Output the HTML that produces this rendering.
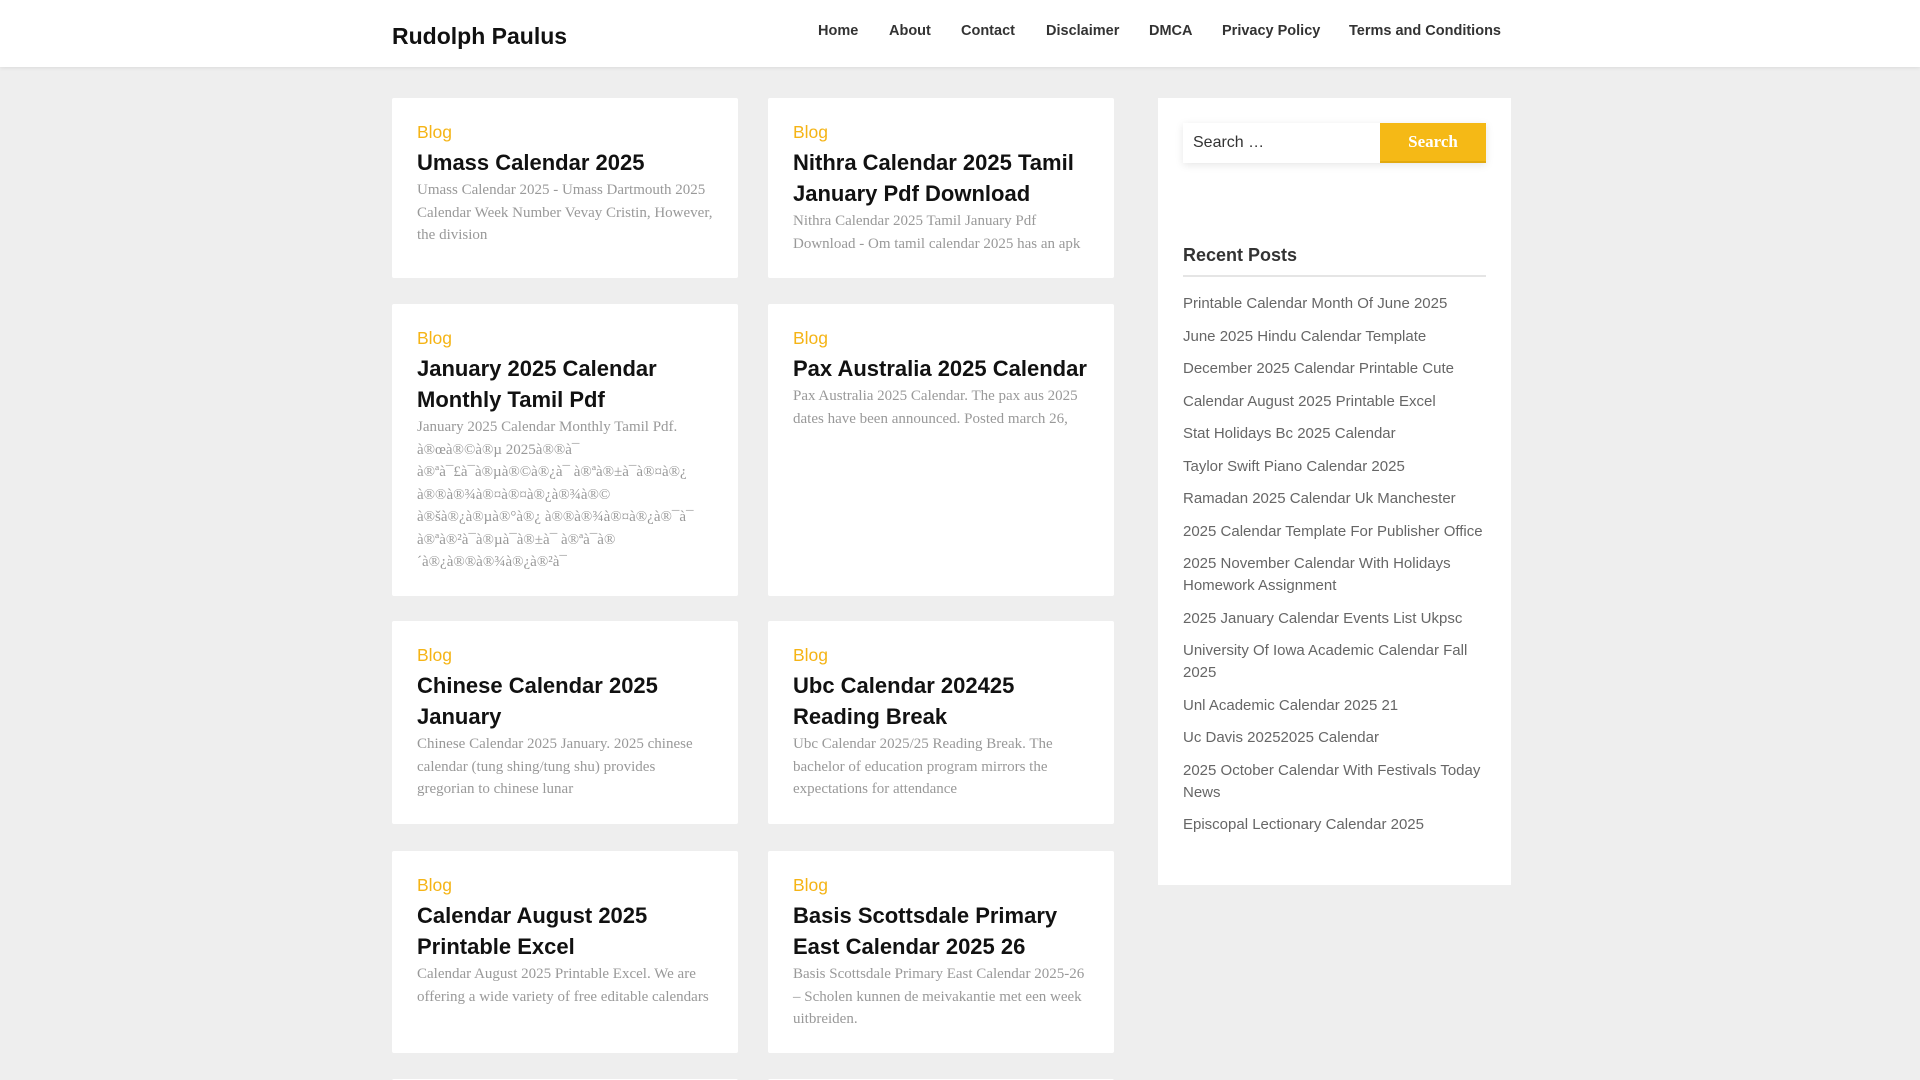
<!DOCTYPE html>
<html><head><meta charset="utf-8"><style>
*{box-sizing:border-box;margin:0;padding:0}
html,body{width:1920px;height:1080px;overflow:hidden}
body{background:#eee;font-family:"Liberation Sans",sans-serif;position:relative}
.hdr{position:absolute;left:0;top:0;width:1920px;height:67px;background:#fff;box-shadow:0 1px 4px rgba(0,0,0,.08)}
.logo{position:absolute;left:392px;top:23px;font-size:23px;font-weight:bold;color:#111}
.nav a{position:absolute;top:23px;font-size:14.5px;font-weight:bold;color:#333;text-decoration:none}
.card{position:absolute;background:#fff;padding:21px 25px 0 25px;border-radius:2px}
.cat{color:#f5b416;font-size:17.5px;line-height:26px}
.t{font-size:22px;font-weight:bold;color:#111;line-height:31px;margin-top:2px}
.ex{font-family:"Liberation Serif",serif;font-size:15px;line-height:22.5px;color:#999;margin-top:1px}
.side{position:absolute;left:1158px;top:98px;width:353px;height:787px;background:#fff;padding:25px 25px}
.sb{display:flex;height:40px;box-shadow:0 2px 8px rgba(0,0,0,.1)}
.sb .in{flex:1;font-size:16px;color:#333;padding:10px 10px;line-height:20px}
.sb .bt{width:106px;background:#f5b916;border-bottom:2px solid #e2a90f;color:#fff;font-family:"Liberation Serif",serif;font-weight:bold;font-size:17px;text-align:center;line-height:38px}
.rp{margin-top:80px;font-size:18px;font-weight:bold;color:#333;line-height:24px;padding-bottom:8px;border-bottom:2px solid #e5e5e5}
ul{list-style:none;margin-top:16px}
li{font-size:15px;color:#666;line-height:22px;margin-bottom:10.5px}
</style></head><body>
<div class="hdr"><div class="logo">Rudolph Paulus</div>
<div class="nav"><a style="left:818px">Home</a><a style="left:889px">About</a><a style="left:961px">Contact</a><a style="left:1046px">Disclaimer</a><a style="left:1149px">DMCA</a><a style="left:1222px">Privacy Policy</a><a style="left:1349px">Terms and Conditions</a></div></div>

<div class="card" style="left:392px;top:98px;width:346px;height:180px"><div class="cat">Blog</div><div class="t">Umass Calendar 2025</div><div class="ex">Umass Calendar 2025 - Umass Dartmouth 2025 Calendar Week Number Vevay Cristin, However, the division</div></div>
<div class="card" style="left:768px;top:98px;width:346px;height:180px"><div class="cat">Blog</div><div class="t">Nithra Calendar 2025 Tamil January Pdf Download</div><div class="ex">Nithra Calendar 2025 Tamil January Pdf Download - Om tamil calendar 2025 has an apk</div></div>

<div class="card" style="left:392px;top:304px;width:346px;height:292px"><div class="cat">Blog</div><div class="t">January 2025 Calendar Monthly Tamil Pdf</div><div class="ex">January 2025 Calendar Monthly Tamil Pdf.<br>à®œà®©à®µ 2025à®®à¯<br>à®ªà¯£à¯à®µà®©à®¿à¯ à®ªà®±à¯à®¤à®¿<br>à®®à®¾à®¤à®¤à®¿à®¾à®©<br>à®šà®¿à®µà®°à®¿ à®®à®¾à®¤à®¿à®¯à¯<br>à®ªà®²à¯à®µà¯à®±à¯ à®ªà¯à®<br>´à®¿à®®à®¾à®¿à®²à¯</div></div>
<div class="card" style="left:768px;top:304px;width:346px;height:292px"><div class="cat">Blog</div><div class="t">Pax Australia 2025 Calendar</div><div class="ex">Pax Australia 2025 Calendar. The pax aus 2025 dates have been announced. Posted march 26,</div></div>

<div class="card" style="left:392px;top:621px;width:346px;height:203px"><div class="cat">Blog</div><div class="t">Chinese Calendar 2025 January</div><div class="ex">Chinese Calendar 2025 January. 2025 chinese calendar (tung shing/tung shu) provides gregorian to chinese lunar</div></div>
<div class="card" style="left:768px;top:621px;width:346px;height:203px"><div class="cat">Blog</div><div class="t">Ubc Calendar 202425 Reading Break</div><div class="ex">Ubc Calendar 2025/25 Reading Break. The bachelor of education program mirrors the expectations for attendance</div></div>

<div class="card" style="left:392px;top:851px;width:346px;height:202px"><div class="cat">Blog</div><div class="t">Calendar August 2025 Printable Excel</div><div class="ex">Calendar August 2025 Printable Excel. We are offering a wide variety of free editable calendars</div></div>
<div class="card" style="left:768px;top:851px;width:346px;height:202px"><div class="cat">Blog</div><div class="t">Basis Scottsdale Primary East Calendar 2025 26</div><div class="ex">Basis Scottsdale Primary East Calendar 2025-26 – Scholen kunnen de meivakantie met een week uitbreiden.</div></div>

<div class="card" style="left:392px;top:1079px;width:346px;height:1px"></div>
<div class="card" style="left:768px;top:1079px;width:346px;height:1px"></div>

<div class="side">
<div class="sb"><div class="in">Search …</div><div class="bt">Search</div></div>
<div class="rp">Recent Posts</div>
<ul>
<li>Printable Calendar Month Of June 2025</li>
<li>June 2025 Hindu Calendar Template</li>
<li>December 2025 Calendar Printable Cute</li>
<li>Calendar August 2025 Printable Excel</li>
<li>Stat Holidays Bc 2025 Calendar</li>
<li>Taylor Swift Piano Calendar 2025</li>
<li>Ramadan 2025 Calendar Uk Manchester</li>
<li>2025 Calendar Template For Publisher Office</li>
<li>2025 November Calendar With Holidays Homework Assignment</li>
<li>2025 January Calendar Events List Ukpsc</li>
<li>University Of Iowa Academic Calendar Fall 2025</li>
<li>Unl Academic Calendar 2025 21</li>
<li>Uc Davis 20252025 Calendar</li>
<li>2025 October Calendar With Festivals Today News</li>
<li>Episcopal Lectionary Calendar 2025</li>
</ul></div>
</body></html>
